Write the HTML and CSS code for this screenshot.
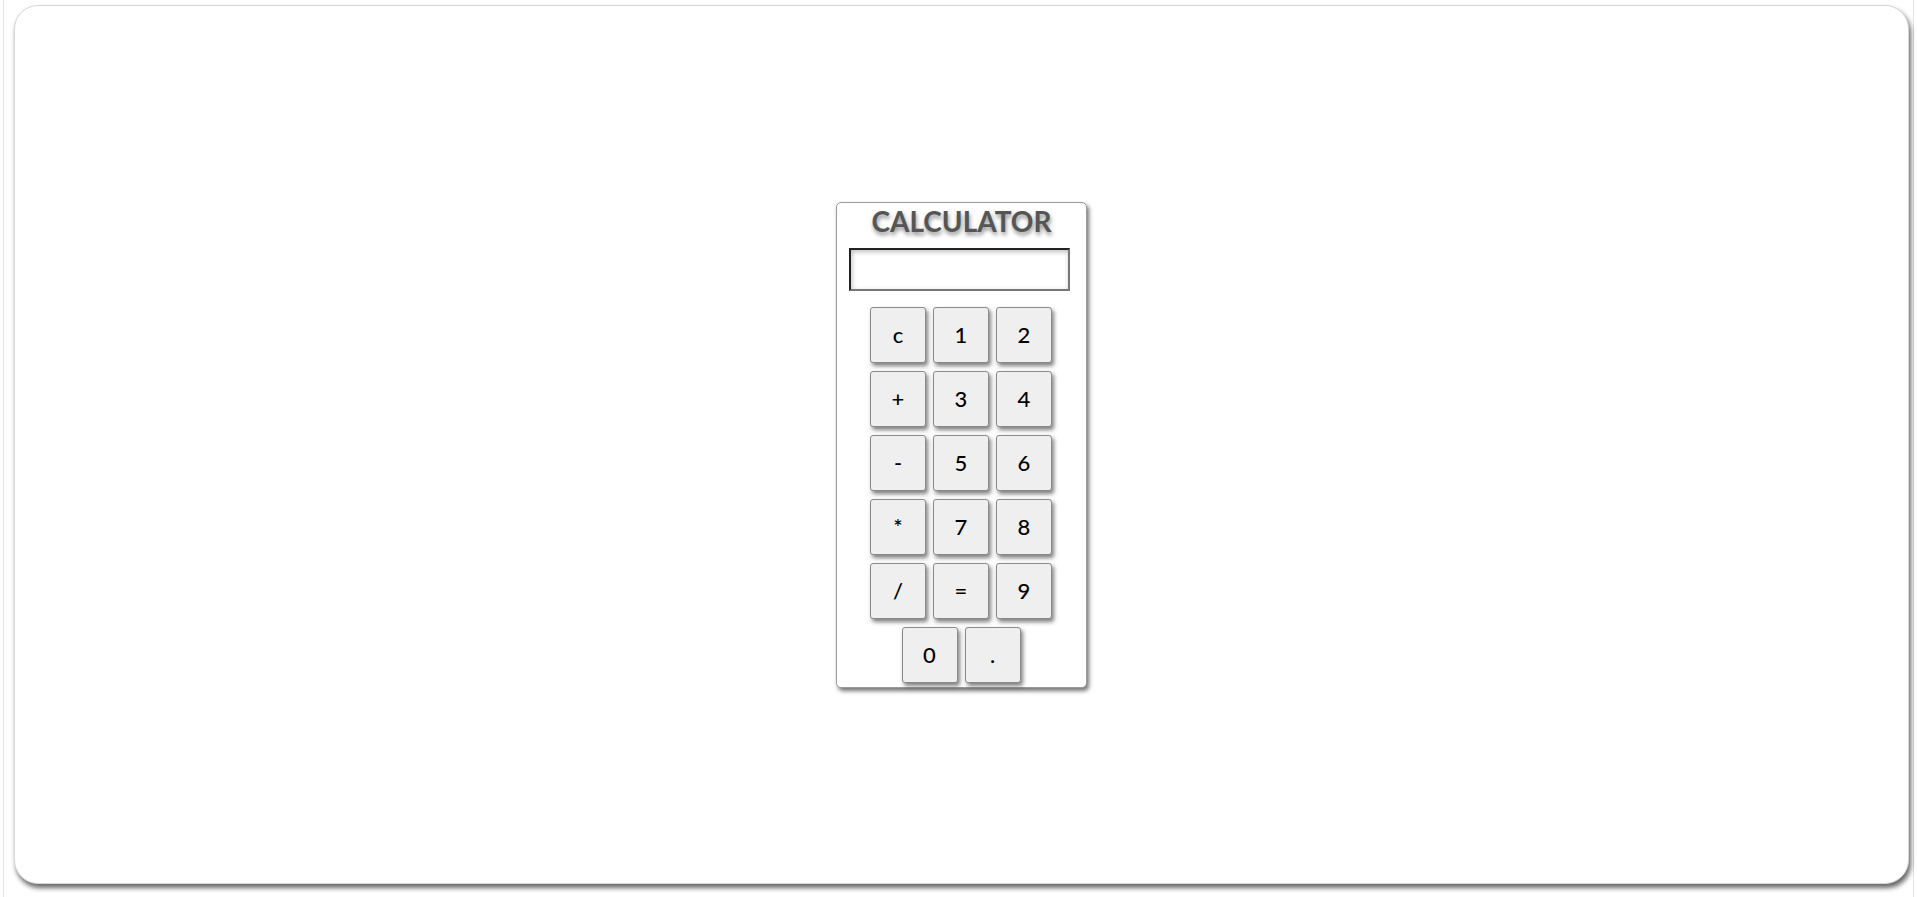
FILE: index.html
```html
<!DOCTYPE html>
<html>
<head>
<meta charset="utf-8">
<title>Calculator</title>
<link rel="stylesheet" href="styles.css">
</head>
<body>
<div class="frame">
  <div class="card">
    <div class="calc">
      <h1 class="title">CALCULATOR</h1>
      <input class="display" type="text" value="">
      <div class="keys">
        <button class="key">c</button><button class="key">1</button><button class="key">2</button>
        <button class="key">+</button><button class="key">3</button><button class="key">4</button>
        <button class="key">-</button><button class="key">5</button><button class="key">6</button>
        <button class="key">*</button><button class="key">7</button><button class="key">8</button>
        <button class="key">/</button><button class="key">=</button><button class="key">9</button>
        <button class="key">0</button><button class="key">.</button>
      </div>
    </div>
  </div>
</div>
</body>
</html>
```

FILE: styles.css
```css
html, body {
  margin: 0;
  padding: 0;
  background: #fff;
}
body {
  font-family: "Lato", "Open Sans", sans-serif;
}
.frame {
  box-sizing: border-box;
  height: 897px;
  margin: 0 3px;
  border-left: 1px solid #e4e4e4;
  border-right: 1px solid #e4e4e4;
  padding: 5px 4px 13px 10px;
  display: flex;
}
.card {
  flex: 1;
  box-sizing: border-box;
  border: 1px solid #d6d6d6;
  border-radius: 24px;
  background: #fff;
  box-shadow: 2px 4px 5px rgba(0,0,0,0.6);
  display: flex;
  align-items: center;
  justify-content: center;
}
.calc {
  box-sizing: border-box;
  width: 251px;
  height: 486px;
  border: 1px solid #9a9a9a;
  border-radius: 5px;
  background: #fff;
  box-shadow: 2px 3px 4px rgba(0,0,0,0.55);
  padding: 0 12px;
  display: flex;
  flex-direction: column;
  align-items: center;
}
.title {
  margin: 0;
  font-size: 28px;
  font-weight: bold;
  color: #555;
  text-shadow: 1px 3px 4px rgba(0,0,0,0.45);
  line-height: 36px;
}
.display {
  align-self: flex-start;
  box-sizing: border-box;
  width: 221px;
  height: 43px;
  margin-top: 9px;
  border: 2px solid;
  border-color: #222 #777 #777 #222;
  background: #fff;
  box-shadow: inset 1px 2px 5px rgba(0,0,0,0.25);
  outline: none;
  padding: 0 6px;
  font-size: 20px;
}
.keys {
  margin-top: 12px;
  width: 192px;
  display: flex;
  flex-wrap: wrap;
  justify-content: center;
}
.key {
  box-sizing: border-box;
  width: 56px;
  height: 56px;
  margin: 4px 4px 4px 3px;
  border: 1px solid #8a8a8a;
  border-radius: 3px;
  background: #efefef;
  box-shadow: 2px 3px 4px rgba(0,0,0,0.5);
  font-family: "Lato", "Open Sans", sans-serif;
  font-size: 22px;
  font-weight: 500;
  color: #000;
  padding: 0;
}
```
